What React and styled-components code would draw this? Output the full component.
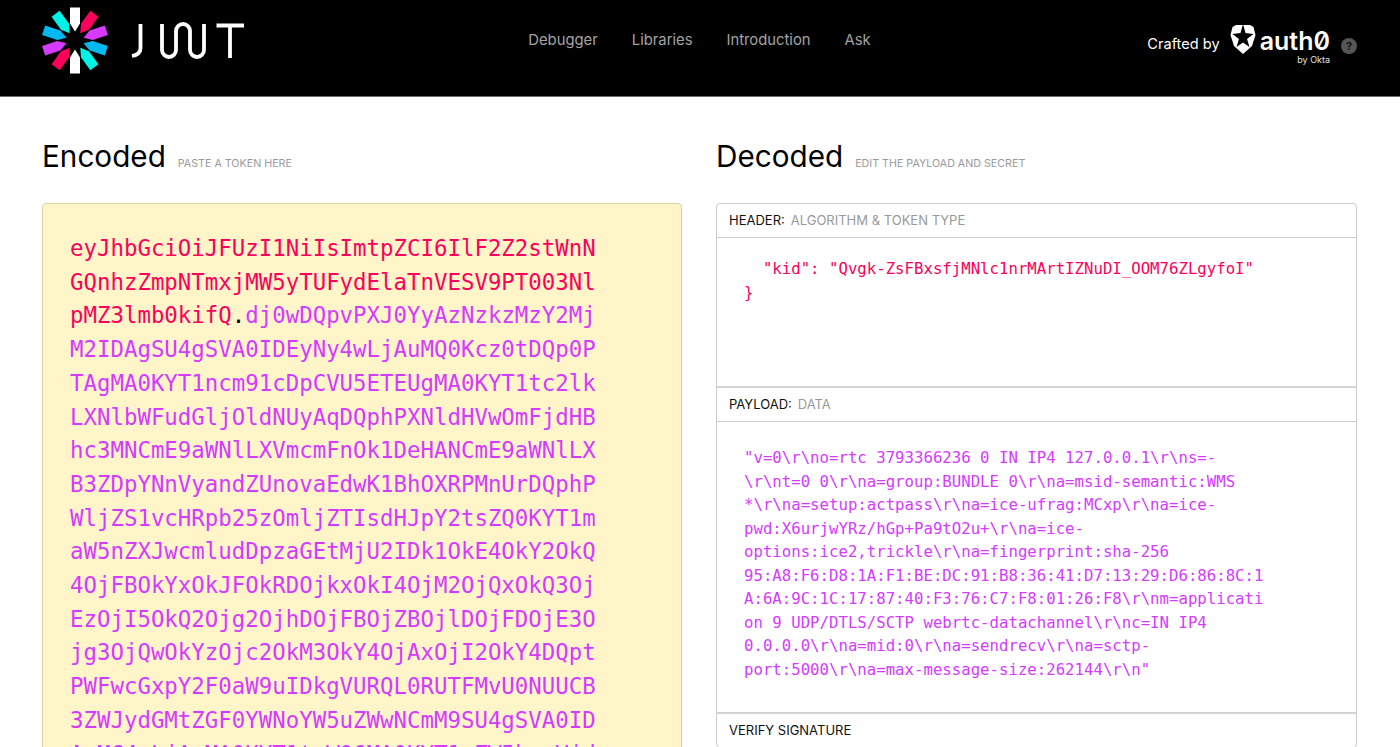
import styled, { createGlobalStyle } from "styled-components";

const GlobalStyle = createGlobalStyle`
html, body {
    margin: 0;
    height: 100%;
    overflow: hidden;
    background: #ffffff;
}
body {
    font-family: "Inter", "Liberation Sans", sans-serif;
}
`;

const MONO = `"DejaVu Sans Mono", "Liberation Mono", monospace`;

const Page = styled.div`
height: 747px;
overflow: hidden;
`;

const Header = styled.header`
height: 96px;
box-sizing: content-box;
background: #000000;
border-bottom: 1px solid #6b6b6b;
display: grid;
grid-template-columns: 1fr auto 1fr;
padding: 0 43px 0 42px;
`;

const LogoLink = styled.a`
display: block;
width: 204px;
height: 68px;
margin-top: 6px;
`;

const Nav = styled.nav`
display: flex;
gap: 34px;
padding-top: 31px;
`;

const NavItem = styled.a`
color: #a3a3a3;
font-size: 14.8px;
line-height: 19px;
`;

const Crafted = styled.div`
display: flex;
justify-content: flex-end;
align-items: flex-start;
padding-top: 25px;
`;

const CraftedLabel = styled.span`
color: #ffffff;
font-size: 14.6px;
line-height: 19px;
margin: 10px 10px 0 0;
`;

const Brand = styled.div`
display: flex;
flex-direction: column;
align-items: flex-end;
`;

const BrandRow = styled.div`
display: flex;
align-items: flex-start;
gap: 4px;
`;

const BrandName = styled.span`
color: #ffffff;
font-size: 25px;
font-weight: 600;
line-height: 28px;
margin-top: 2px;
font-feature-settings: "zero";
`;

const BrandSub = styled.span`
color: #e0e0e0;
font-size: 9px;
line-height: 10px;
`;

const Help = styled.span`
width: 16px;
height: 16px;
border-radius: 50%;
background: #555555;
color: #111111;
font-size: 11px;
font-weight: 700;
line-height: 16px;
text-align: center;
margin: 13px 0 0 11px;
`;

const Main = styled.main`
display: grid;
grid-template-columns: 640px 641px;
column-gap: 34px;
padding: 39px 43px 0 42px;
`;

const Column = styled.section``;

const TitleRow = styled.div`
display: flex;
align-items: baseline;
gap: 12px;
height: 67px;
`;

const Title = styled.h2`
margin: 0;
font-size: 29.7px;
font-weight: 400;
line-height: 40px;
color: #000000;
`;

const Hint = styled.span`
font-size: 10.7px;
color: #999999;
text-transform: uppercase;
`;

const EncodedBox = styled.div`
background: #fff5c9;
border: 1px solid #d8d2ac;
border-radius: 4px;
padding: 28px 27px 0;
height: 600px;
`;

const TokenLine = styled.div`
font-family: ${MONO};
font-size: 22.4px;
line-height: 33.7px;
white-space: pre;
`;

const Tok = styled.span`
color: ${(p) => p.$color};
`;

const Panel = styled.div`
border: 1px solid #cccccc;
border-radius: 4px;
`;

const PanelHead = styled.div`
height: 31px;
padding: 0 0 2px 12px;
display: flex;
align-items: center;
gap: 6px;
font-size: 13px;
color: #111111;
border-top: ${(p) => (p.$first ? "none" : "2px solid #d4d4d4")};
border-bottom: ${(p) => (p.$last ? "none" : "1px solid #cccccc")};
`;

const PanelHint = styled.span`
color: #999999;
`;

const PanelBody = styled.div`
height: ${(p) => p.$height}px;
padding: ${(p) => p.$top}px 0 0 27px;
box-sizing: border-box;
`;

const CodeLine = styled.div`
font-family: ${MONO};
font-size: 15.7px;
line-height: 23.5px;
white-space: pre;
color: ${(p) => p.$color};
`;

const PINK = "#fb015b";
const PURPLE = "#d63aff";

const tokenLines = [
    [[PINK, "eyJhbGciOiJFUzI1NiIsImtpZCI6IlF2Z2stWnN"]],
    [[PINK, "GQnhzZmpNTmxjMW5yTUFydElaTnVESV9PT003Nl"]],
    [[PINK, "pMZ3lmb0kifQ"], ["#000000", "."], [PURPLE, "dj0wDQpvPXJ0YyAzNzkzMzY2Mj"]],
    [[PURPLE, "M2IDAgSU4gSVA0IDEyNy4wLjAuMQ0Kcz0tDQp0P"]],
    [[PURPLE, "TAgMA0KYT1ncm91cDpCVU5ETEUgMA0KYT1tc2lk"]],
    [[PURPLE, "LXNlbWFudGljOldNUyAqDQphPXNldHVwOmFjdHB"]],
    [[PURPLE, "hc3MNCmE9aWNlLXVmcmFnOk1DeHANCmE9aWNlLX"]],
    [[PURPLE, "B3ZDpYNnVyandZUnovaEdwK1BhOXRPMnUrDQphP"]],
    [[PURPLE, "WljZS1vcHRpb25zOmljZTIsdHJpY2tsZQ0KYT1m"]],
    [[PURPLE, "aW5nZXJwcmludDpzaGEtMjU2IDk1OkE4OkY2OkQ"]],
    [[PURPLE, "4OjFBOkYxOkJFOkRDOjkxOkI4OjM2OjQxOkQ3Oj"]],
    [[PURPLE, "EzOjI5OkQ2Ojg2OjhDOjFBOjZBOjlDOjFDOjE3O"]],
    [[PURPLE, "jg3OjQwOkYzOjc2OkM3OkY4OjAxOjI2OkY4DQpt"]],
    [[PURPLE, "PWFwcGxpY2F0aW9uIDkgVURQL0RUTFMvU0NUUCB"]],
    [[PURPLE, "3ZWJydGMtZGF0YWNoYW5uZWwNCmM9SU4gSVA0ID"]],
    [[PURPLE, "AuMC4wLjAuMA0KYT1taWQ6MA0KYT1zZW5kcmVjd"]],
];

const payloadLines = [
    "\"v=0\\r\\no=rtc 3793366236 0 IN IP4 127.0.0.1\\r\\ns=-",
    "\\r\\nt=0 0\\r\\na=group:BUNDLE 0\\r\\na=msid-semantic:WMS",
    "*\\r\\na=setup:actpass\\r\\na=ice-ufrag:MCxp\\r\\na=ice-",
    "pwd:X6urjwYRz/hGp+Pa9tO2u+\\r\\na=ice-",
    "options:ice2,trickle\\r\\na=fingerprint:sha-256",
    "95:A8:F6:D8:1A:F1:BE:DC:91:B8:36:41:D7:13:29:D6:86:8C:1",
    "A:6A:9C:1C:17:87:40:F3:76:C7:F8:01:26:F8\\r\\nm=applicati",
    "on 9 UDP/DTLS/SCTP webrtc-datachannel\\r\\nc=IN IP4",
    "0.0.0.0\\r\\na=mid:0\\r\\na=sendrecv\\r\\na=sctp-",
    "port:5000\\r\\na=max-message-size:262144\\r\\n\"",
];

const RAY = "-5,-33 5,-33 5,-17 0,-9 -5,-17";
const RAY_COLORS = ["#ffffff", "#fb015b", "#d63aff", "#00b9f1", "#00f2e6"];

function JwtLogo() {
    return (
        <svg width="204" height="68" viewBox="42 6 204 68" fill="none">
            <g transform="translate(75 40.5)">
                {Array.from({ length: 10 }, (_, i) => (
                    <polygon key={i} points={RAY} fill={RAY_COLORS[i % 5]} transform={`rotate(${i * 36})`} />
                ))}
            </g>
            <g stroke="#ffffff" strokeWidth="3.8">
                <path d="M140.5 24V48C140.5 52 138 55 132 56" />
                <path d="M162 24V50a7 7 0 0 0 14 0V31a7 7 0 0 1 14 0V50a7 7 0 0 0 14 0V24" />
                <path d="M216.5 25.5H244M230 25.5V58" />
            </g>
        </svg>
    );
}

function ShieldLogo() {
    return (
        <svg width="26" height="29" viewBox="0 0 26 29">
            <path fill="#ffffff" d="M6 0H20L23.5 2 25.5 10 22 21 13 29 4 21 0.5 10 2.5 2Z" />
            <path fill="#000000" d="M13 -1L15.5 8 23.5 9 17 14 19.5 22 13 17.5 6.5 22 9 14 2.5 9 10.5 8Z" />
        </svg>
    );
}

export default function App() {
    return (
        <Page>
            <GlobalStyle />
            <Header>
                <LogoLink><JwtLogo /></LogoLink>
                <Nav>
                    <NavItem>Debugger</NavItem>
                    <NavItem>Libraries</NavItem>
                    <NavItem>Introduction</NavItem>
                    <NavItem>Ask</NavItem>
                </Nav>
                <Crafted>
                    <CraftedLabel>Crafted by</CraftedLabel>
                    <Brand>
                        <BrandRow>
                            <ShieldLogo />
                            <BrandName>auth0</BrandName>
                        </BrandRow>
                        <BrandSub>by Okta</BrandSub>
                    </Brand>
                    <Help>?</Help>
                </Crafted>
            </Header>
            <Main>
                <Column>
                    <TitleRow>
                        <Title>Encoded</Title>
                        <Hint>Paste a token here</Hint>
                    </TitleRow>
                    <EncodedBox>
                        {tokenLines.map((line, i) => (
                            <TokenLine key={i}>
                                {line.map(([color, text], j) => (
                                    <Tok key={j} $color={color}>{text}</Tok>
                                ))}
                            </TokenLine>
                        ))}
                    </EncodedBox>
                </Column>
                <Column>
                    <TitleRow>
                        <Title>Decoded</Title>
                        <Hint>Edit the payload and secret</Hint>
                    </TitleRow>
                    <Panel>
                        <PanelHead $first>HEADER: <PanelHint>ALGORITHM &amp; TOKEN TYPE</PanelHint></PanelHead>
                        <PanelBody $height={148} $top={19}>
                            <CodeLine $color={PINK}>{"  \"kid\": \"Qvgk-ZsFBxsfjMNlc1nrMArtIZNuDI_OOM76ZLgyfoI\""}</CodeLine>
                            <CodeLine $color={PINK}>{"}"}</CodeLine>
                        </PanelBody>
                        <PanelHead>PAYLOAD: <PanelHint>DATA</PanelHint></PanelHead>
                        <PanelBody $height={290} $top={24}>
                            {payloadLines.map((line, i) => (
                                <CodeLine key={i} $color={PURPLE}>{line}</CodeLine>
                            ))}
                        </PanelBody>
                        <PanelHead $last>VERIFY SIGNATURE</PanelHead>
                    </Panel>
                </Column>
            </Main>
        </Page>
    );
}
